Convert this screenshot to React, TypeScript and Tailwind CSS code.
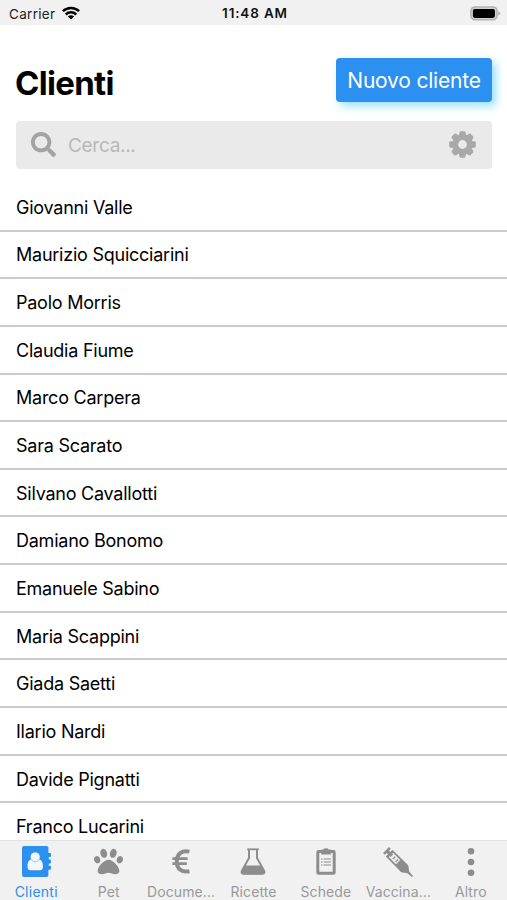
import React from 'react';
import { FaPaw, FaSearch } from 'react-icons/fa';

const clients = [
    'Giovanni Valle',
    'Maurizio Squicciarini',
    'Paolo Morris',
    'Claudia Fiume',
    'Marco Carpera',
    'Sara Scarato',
    'Silvano Cavallotti',
    'Damiano Bonomo',
    'Emanuele Sabino',
    'Maria Scappini',
    'Giada Saetti',
    'Ilario Nardi',
    'Davide Pignatti',
    'Franco Lucarini',
];

const WifiIcon = () => (
    <svg width="18" height="14" viewBox="0 0 18 14" fill="none" stroke="#000" strokeWidth="2.5">
        <path d="M0.9 5.2 A11.6 11.6 0 0 1 17.1 5.2" />
        <path d="M3.8 8.5 A7.4 7.4 0 0 1 14.2 8.5" />
        <path d="M9 13.6 L5.9 10.5 A4.4 4.4 0 0 1 12.1 10.5 Z" fill="#000" stroke="none" />
    </svg>
);

const BatteryIcon = () => (
    <svg width="31" height="15" viewBox="0 0 31 15">
        <rect x="1" y="1" width="26" height="12.8" rx="4" fill="#d0d0d0" stroke="#b4b4b4" strokeWidth="1.6" />
        <rect x="2.9" y="2.9" width="22" height="9" rx="1.8" fill="#000" />
        <path d="M28.3 5.1 L30.6 7.4 L28.3 9.7 Z" fill="#a8a8a8" />
    </svg>
);

const teeth = [0, 45, 90, 135, 180, 225, 270, 315];

const GearIcon = () => (
    <svg width="27" height="27" viewBox="-13.5 -13.5 27 27" fill="#a9a9a9">
        {teeth.map((angle) => (
            <path key={angle} d="M-3.8 -8.5 L-2.9 -12.5 Q-2.7 -13.3 -1.9 -13.3 H1.9 Q2.7 -13.3 2.9 -12.5 L3.8 -8.5 Z" transform={`rotate(${angle})`} />
        ))}
        <circle r="7.2" fill="none" stroke="#a9a9a9" strokeWidth="5.6" />
    </svg>
);

const AddressBookIcon = () => (
    <svg width="29" height="31" viewBox="0 0 29 31">
        <path
            d="M2 0 H24.5 Q26.4 0 26.4 1.6 V7 H28 Q29 7 29 8 V10 Q29 11 28 11 H26.8 V13.4 H28 Q29 13.4 29 14.4 V16.4 Q29 17.4 28 17.4 H26.8 V19.8 H28 Q29 19.8 29 20.8 V22.8 Q29 23.8 28 23.8 H26.4 V29.2 Q26.4 31 24.5 31 H2 Q0 31 0 29 V2 Q0 0 2 0 Z"
            fill="#2b90ef"
        />
        <path d="M9.2 13.4 Q13.2 17.4 17.2 13.4 C20.2 14 20.9 17.3 20.9 20.8 C20.9 22.9 19.8 24.2 18.2 24.2 H8.2 C6.6 24.2 5.5 22.9 5.5 20.8 C5.5 17.3 6.2 14 9.2 13.4 Z" fill="#f4f8fd" />
        <ellipse cx="13.2" cy="11" rx="4.8" ry="4.8" fill="#f4f8fd" stroke="#2b90ef" strokeWidth="0.4" />
    </svg>
);

const EuroIcon = () => (
    <svg width="18" height="25" viewBox="0 0 18 25" fill="none" stroke="#8d8d8d">
        <path d="M17.4 2.6 C9.8 0.9 4.8 5 4.8 12.4 C4.8 19.8 9.8 23.9 17.4 22.2" strokeWidth="4" />
        <path d="M0.4 9.6 H15.6 M0.4 14.6 H14.8" strokeWidth="2.7" />
    </svg>
);

const FlaskIcon = () => (
    <svg width="26" height="27" viewBox="0 0 26 27">
        <path d="M9 1.5 V10 L2 22.6 Q0.8 25.7 3.4 25.7 H22.6 Q25.2 25.7 24 22.6 L17 10 V1.5" fill="none" stroke="#8d8d8d" strokeWidth="2" />
        <path d="M7.2 0.4 H18.8 V2.2 H7.2 Z" fill="#8d8d8d" />
        <path d="M4.7 17.5 H21.3 L24.8 23.8 Q25.2 26.3 22.6 26.3 H3.4 Q0.8 26.3 1.2 23.8 Z" fill="#8d8d8d" />
    </svg>
);

const ClipboardIcon = () => (
    <svg width="20" height="27" viewBox="0 0 20 27" fill="#8d8d8d">
        <path d="M5.2 1.6 H7.4 Q7.8 0.2 10 0.2 Q12.2 0.2 12.6 1.6 H14.8 V6.4 H5.2 Z" />
        <rect x="1.8" y="3.6" width="16.4" height="21.6" rx="0.8" fill="none" stroke="#8d8d8d" strokeWidth="3" />
        <path d="M5 10.5 H6.5 V11.6 H5 Z M7.6 10.5 H15 V11.6 H7.6 Z M5 13.5 H6.5 V14.6 H5 Z M7.6 13.5 H15 V14.6 H7.6 Z M5 16.5 H6.5 V17.6 H5 Z M7.6 16.5 H15 V17.6 H7.6 Z" />
    </svg>
);

const SyringeIcon = () => (
    <svg width="30" height="30" viewBox="0 0 30 30" fill="#8d8d8d">
        <path d="M0 6 L6 0 L7.8 1.8 L5.9 3.7 L7.2 5 L9.4 2.8 L25.2 18.2 L26.2 24.4 L30 29 L29 30 L24.4 26.2 L18.2 25.2 L2.8 9.4 L5 7.2 L3.7 5.9 L1.8 7.8 Z" />
        <path d="M5.8 10 L10 5.8 L17.2 13 L13 17.2 Z" fill="#f1f1f1" />
        <path d="M9.6 7 L7.2 9.4 M12.3 9.7 L9.9 12.1 M15 12.4 L12.6 14.8" fill="none" stroke="#8d8d8d" strokeWidth="1.4" />
    </svg>
);

const DotsIcon = () => (
    <svg width="8" height="30" viewBox="0 0 8 30" fill="#8d8d8d">
        <circle cx="4" cy="4.2" r="3.3" />
        <circle cx="4" cy="15" r="3.3" />
        <circle cx="4" cy="25.8" r="3.3" />
    </svg>
);

const tabs = [
    { title: 'Clienti', icon: <AddressBookIcon />, active: true },
    { title: 'Pet', icon: <FaPaw size={29} /> },
    { title: 'Docume...', icon: <EuroIcon /> },
    { title: 'Ricette', icon: <FlaskIcon /> },
    { title: 'Schede', icon: <ClipboardIcon /> },
    { title: 'Vaccina...', icon: <SyringeIcon /> },
    { title: 'Altro', icon: <DotsIcon /> },
];

const App = () => {
    return (
        <div className="flex h-[900px] w-[507px] flex-col overflow-hidden bg-white font-['Inter',sans-serif] text-black">
            <div className="grid h-[25px] shrink-0 grid-cols-3 items-center bg-[#f1f1f1] pr-[6px] pl-[9px] text-[13.5px]">
                <div className="flex items-center gap-[6px] pt-[2px]">
                    <span className="pt-[1px] tracking-[0.3px] text-[#222]">Carrier</span>
                    <div className="mb-[2px] ml-[1px]">
                        <WifiIcon />
                    </div>
                </div>
                <div className="pt-[2px] text-center font-semibold tracking-[0.85px] text-[#111]">11:48 AM</div>
                <div className="flex justify-end pt-[1px]">
                    <BatteryIcon />
                </div>
            </div>

            <div className="flex h-[96px] shrink-0 items-start justify-between pr-[15px] pl-[15px] pt-[33px]">
                <h1 className="pt-[5px] text-[33px] leading-[40px] font-bold tracking-[-0.7px]">Clienti</h1>
                <button type="button" className="h-[44px] w-[156px] rounded-[4px] bg-[#2b90ef] pt-[2px] text-[21px] tracking-[-0.2px] text-white shadow-[4px_4px_8px_rgba(80,205,250,0.6)]">
                    Nuovo cliente
                </button>
            </div>

            <div className="mr-[15px] ml-4 flex h-[48px] shrink-0 items-center rounded-[4px] bg-[#eaeaea] pr-[16px] pl-[15px]">
                <FaSearch size={25} className="mb-[1px] text-[#a3a3a3]" />
                <span className="ml-3 grow pt-[2px] text-[19px] tracking-[-0.3px] text-[#b8b8b8]">Cerca...</span>
                <div className="mb-[2px]">
                    <GearIcon />
                </div>
            </div>

            <div className="mt-[15px] min-h-0 grow overflow-hidden">
                {clients.map((name) => (
                    <div key={name} className="flex h-[47.65px] items-center border-b-2 border-[#cbcbcb] px-4 pt-[1px] text-[18px] tracking-[-0.24px]">
                        {name}
                    </div>
                ))}
            </div>

            <div className="grid h-[60px] shrink-0 grid-cols-7 border-t border-[#e2e2e2] bg-[#f1f1f1]">
                {tabs.map((tab) => (
                    <div key={tab.title} className={tab.active ? 'flex flex-col items-center text-[#2b90ef]' : 'flex flex-col items-center text-[#8d8d8d]'}>
                        <div className="flex h-[41px] items-center">{tab.icon}</div>
                        <span className={tab.active ? 'text-[14px] leading-[19px] tracking-[0.25px]' : 'text-[14px] leading-[19px] tracking-[0.1px] text-[#999]'}>{tab.title}</span>
                    </div>
                ))}
            </div>
        </div>
    );
};

export default App;
